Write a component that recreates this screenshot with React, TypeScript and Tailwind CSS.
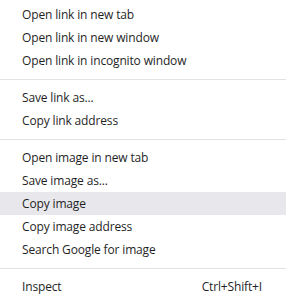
import React from "react";

type Item = { label: string; shortcut?: string; active?: boolean } | "sep";

const items: Item[] = [
  { label: "Open link in new tab" },
  { label: "Open link in new window" },
  { label: "Open link in incognito window" },
  "sep",
  { label: "Save link as..." },
  { label: "Copy link address" },
  "sep",
  { label: "Open image in new tab" },
  { label: "Save image as..." },
  { label: "Copy image", active: true },
  { label: "Copy image address" },
  { label: "Search Google for image" },
  "sep",
  { label: "Inspect", shortcut: "Ctrl+Shift+I" },
];

export default function App() {
  return (
    <div
      className="w-[286px] h-[300px] bg-white overflow-hidden pt-[3px] text-[12px] tracking-[-0.15px] text-[#1f1f1f]"
      style={{ fontFamily: '"Open Sans", "Noto Sans", sans-serif' }}
    >
      {items.map((it, i) =>
        it === "sep" ? (
          <div key={i} className="h-[14px] flex items-center">
            <div className="w-full h-px bg-[#e3e3e3]" />
          </div>
        ) : (
          <div
            key={i}
            className={`h-[23px] flex items-center justify-between pl-[22px] pr-[24px] ${
              it.active ? "bg-[#e8e8ec]" : ""
            }`}
          >
            <span>{it.label}</span>
            {it.shortcut && <span>{it.shortcut}</span>}
          </div>
        )
      )}
    </div>
  );
}
